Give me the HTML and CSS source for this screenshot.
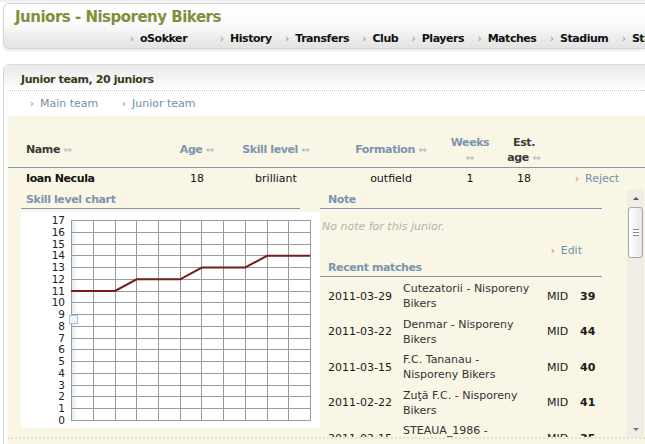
FILE: index.html
```html
<!DOCTYPE html>
<html>
<head>
<meta charset="utf-8">
<title>Juniors - Nisporeny Bikers</title>
<link rel="stylesheet" href="styles.css">
</head>
<body>
<header class="top">
  <h1 class="title">Juniors - Nisporeny Bikers</h1>
  <nav class="nav">
    <a class="nav-item first"><span class="arr">›</span>oSokker</a>
    <a class="nav-item"><span class="arr">›</span>History</a>
    <a class="nav-item"><span class="arr">›</span>Transfers</a>
    <a class="nav-item"><span class="arr">›</span>Club</a>
    <a class="nav-item"><span class="arr">›</span>Players</a>
    <a class="nav-item"><span class="arr">›</span>Matches</a>
    <a class="nav-item"><span class="arr">›</span>Stadium</a>
    <a class="nav-item"><span class="arr">›</span>Statistics</a>
  </nav>
</header>

<section class="panel">
  <div class="panel-head">Junior team, 20 juniors</div>
  <div class="tabs">
    <a class="tab first"><span class="arr">›</span>Main team</a>
    <a class="tab"><span class="arr">›</span>Junior team</a>
  </div>
  <div class="content">
    <div class="grid thead">
      <div class="c-name dark">Name <span class="sort">⇔</span></div>
      <div class="c-mid">Age <span class="sort">⇔</span></div>
      <div class="c-mid">Skill level <span class="sort">⇔</span></div>
      <div></div>
      <div class="c-mid">Formation <span class="sort">⇔</span></div>
      <div class="c-mid">Weeks<br><span class="sort">⇔</span></div>
      <div class="c-mid dark">Est.<br>age <span class="sort">⇔</span></div>
      <div></div>
    </div>
    <div class="grid trow">
      <div class="c-name"><b>Ioan Necula</b></div>
      <div class="c-mid">18</div>
      <div class="c-mid">brilliant</div>
      <div></div>
      <div class="c-mid">outfield</div>
      <div class="c-mid">1</div>
      <div class="c-mid">18</div>
      <div class="c-act"><a class="link"><span class="arr">›</span>Reject</a></div>
    </div>

    <div class="detail">
      <div class="col-chart">
        <div class="sub-title">Skill level chart</div>
        <div class="chart">
          <svg width="299" height="216" viewBox="0 0 299 216">
            <defs>
              <linearGradient id="shade" x1="0" x2="1" y1="0" y2="0">
                <stop offset="0" stop-color="#d6e2ee"/>
                <stop offset="1" stop-color="#ffffff" stop-opacity="0"/>
              </linearGradient>
            </defs>
            <rect x="50" y="8" width="9" height="200" fill="url(#shade)"/>
            <g stroke="#9a9a9a" stroke-width="1" shape-rendering="crispEdges">
              <line x1="50" y1="8.5" x2="289" y2="8.5"/>
              <line x1="50" y1="20.3" x2="289" y2="20.3"/>
              <line x1="50" y1="32" x2="289" y2="32"/>
              <line x1="50" y1="43.8" x2="289" y2="43.8"/>
              <line x1="50" y1="55.5" x2="289" y2="55.5"/>
              <line x1="50" y1="67.3" x2="289" y2="67.3"/>
              <line x1="50" y1="79" x2="289" y2="79"/>
              <line x1="50" y1="90.8" x2="289" y2="90.8"/>
              <line x1="50" y1="102.6" x2="289" y2="102.6"/>
              <line x1="50" y1="114.4" x2="289" y2="114.4"/>
              <line x1="50" y1="126.1" x2="289" y2="126.1"/>
              <line x1="50" y1="137.9" x2="289" y2="137.9"/>
              <line x1="50" y1="149.6" x2="289" y2="149.6"/>
              <line x1="50" y1="161.4" x2="289" y2="161.4"/>
              <line x1="50" y1="173.1" x2="289" y2="173.1"/>
              <line x1="50" y1="184.9" x2="289" y2="184.9"/>
              <line x1="50" y1="196.6" x2="289" y2="196.6"/>
              <line x1="50" y1="208.5" x2="289" y2="208.5"/>
              <line x1="50.5" y1="8" x2="50.5" y2="209"/>
              <line x1="72.2" y1="8" x2="72.2" y2="209"/>
              <line x1="94" y1="8" x2="94" y2="209"/>
              <line x1="115.7" y1="8" x2="115.7" y2="209"/>
              <line x1="137.4" y1="8" x2="137.4" y2="209"/>
              <line x1="159.1" y1="8" x2="159.1" y2="209"/>
              <line x1="180.9" y1="8" x2="180.9" y2="209"/>
              <line x1="202.6" y1="8" x2="202.6" y2="209"/>
              <line x1="224.3" y1="8" x2="224.3" y2="209"/>
              <line x1="246" y1="8" x2="246" y2="209"/>
              <line x1="267.8" y1="8" x2="267.8" y2="209"/>
              <line x1="289.5" y1="8" x2="289.5" y2="209"/>
            </g>
            <rect x="48.5" y="103.5" width="8" height="8" fill="#eef4fa" stroke="#a9c3dc"/>
            <polyline fill="none" stroke="#761b1b" stroke-width="2" points="50,79 94,79 115.7,67.3 159.1,67.3 180.9,55.5 224.3,55.5 246,43.8 289,43.8"/>
            <g class="axis" text-anchor="end">
              <text x="44" y="12">17</text>
              <text x="44" y="23.8">16</text>
              <text x="44" y="35.5">15</text>
              <text x="44" y="47.3">14</text>
              <text x="44" y="59">13</text>
              <text x="44" y="70.8">12</text>
              <text x="44" y="82.5">11</text>
              <text x="44" y="94.3">10</text>
              <text x="44" y="106.1">9</text>
              <text x="44" y="117.9">8</text>
              <text x="44" y="129.6">7</text>
              <text x="44" y="141.4">6</text>
              <text x="44" y="153.1">5</text>
              <text x="44" y="164.9">4</text>
              <text x="44" y="176.6">3</text>
              <text x="44" y="188.4">2</text>
              <text x="44" y="200.1">1</text>
              <text x="44" y="211.9">0</text>
            </g>
          </svg>
        </div>
      </div>

      <div class="col-info">
        <div class="sub-title">Note</div>
        <div class="note">No note for this junior.</div>
        <div class="edit"><a class="link"><span class="arr">›</span>Edit</a></div>
        <div class="sub-title">Recent matches</div>
        <div class="matches">
          <div class="match">
            <div class="m-date">2011-03-29</div>
            <div class="m-name">Cutezatorii - Nisporeny<br>Bikers</div>
            <div class="m-pos">MID</div>
            <div class="m-score">39</div>
          </div>
          <div class="match">
            <div class="m-date">2011-03-22</div>
            <div class="m-name">Denmar - Nisporeny<br>Bikers</div>
            <div class="m-pos">MID</div>
            <div class="m-score">44</div>
          </div>
          <div class="match">
            <div class="m-date">2011-03-15</div>
            <div class="m-name">F.C. Tananau -<br>Nisporeny Bikers</div>
            <div class="m-pos">MID</div>
            <div class="m-score">40</div>
          </div>
          <div class="match">
            <div class="m-date">2011-02-22</div>
            <div class="m-name">Zuţă F.C. - Nisporeny<br>Bikers</div>
            <div class="m-pos">MID</div>
            <div class="m-score">41</div>
          </div>
          <div class="match">
            <div class="m-date">2011-02-15</div>
            <div class="m-name">STEAUA_1986 -<br>Nisporeny Bikers</div>
            <div class="m-pos">MID</div>
            <div class="m-score">35</div>
          </div>
        </div>
      </div>

      <div class="scrollbar">
        <div class="sb-btn"><span class="tri up"></span></div>
        <div class="sb-thumb"><span class="grip"></span></div>
        <div class="sb-track"></div>
        <div class="sb-btn"><span class="tri down"></span></div>
      </div>
    </div>
    <div class="bottom-edge"></div>
  </div>
</section>
</body>
</html>
```
FILE: styles.css
```css
html, body {
  margin: 0;
  padding: 0;
}
body {
  width: 645px;
  height: 444px;
  overflow: hidden;
  background: linear-gradient(#ececec, #ffffff 4px);
  font-family: "DejaVu Sans", Verdana, sans-serif;
  font-size: 11px;
  color: #111;
}
a { text-decoration: none; cursor: pointer; }
b { letter-spacing: -0.4px; }

.arr {
  display: inline-block;
  color: #cc7a3a;
  font-size: 10px;
  font-weight: normal;
  letter-spacing: 0;
  margin-right: 6px;
}

/* top header */
.top {
  margin: 3px 0 0 3px;
  height: 44px;
  border: 1px solid #d6d6d6;
  border-right: 0;
  border-radius: 6px 0 0 6px;
  background: linear-gradient(#ffffff 0%, #fbfbfb 45%, #e3e3e3 100%);
  box-shadow: 0 2px 2px rgba(0, 0, 0, 0.07);
  overflow: hidden;
}
.title {
  margin: 0;
  padding: 4px 0 0 11px;
  font-size: 15px;
  line-height: 18px;
  letter-spacing: -0.5px;
  font-weight: bold;
  color: #7f8f3c;
  white-space: nowrap;
}
.nav {
  display: flex;
  margin-top: 6px;
  padding-left: 126px;
  line-height: 14px;
  white-space: nowrap;
}
.nav-item {
  flex: none;
  font-weight: bold;
  letter-spacing: -0.45px;
  color: #111;
  margin-right: 13.5px;
}
.nav-item.first { width: 90px; margin-right: 0; }

/* panel */
.panel {
  margin: 15px 0 0 3px;
  border-top: 1px solid #dcdcdc;
  border-left: 1px solid #d4d4d4;
  border-radius: 6px 0 0 0;
  height: 380px;
}
.panel-head {
  height: 21px;
  padding: 4px 0 0 17px;
  line-height: 22px;
  font-weight: bold;
  letter-spacing: -0.4px;
  color: #2f4216;
  background: linear-gradient(#e9e9e9, #ffffff);
  border-radius: 6px 0 0 0;
}
.tabs {
  display: flex;
  margin-left: 4px;
  border-top: 1px dotted #c6c6c6;
  height: 25px;
  line-height: 26px;
  padding-left: 22px;
}
.tab { flex: none; color: #7290aa; }
.tab.first { width: 92px; }

.content {
  margin-left: 4px;
  background: #f9f6e6;
  height: 328px;
}

.grid {
  display: grid;
  grid-template-columns: 158px 62px 96px 8px 118px 40px 68px 1fr;
  align-items: center;
}
.thead {
  height: 35px;
  padding-top: 16px;
  border-bottom: 1px solid #8797b0;
  line-height: 15px;
  font-weight: bold;
  letter-spacing: -0.4px;
  color: #7a95ad;
  white-space: nowrap;
}
.thead .dark { color: #3a3a3a; }
.sort { color: #a9b5c2; font-weight: normal; font-size: 10px; letter-spacing: 0; }
.c-name { padding-left: 18px; }
.c-mid { text-align: center; }
.c-act { padding-left: 17px; }
.trow {
  height: 22px;
  line-height: 22px;
  color: #111;
}
.link { color: #7290aa; }

/* detail area */
.detail {
  display: flex;
  height: 247px;
  overflow: hidden;
}
.col-chart {
  width: 299px;
  padding-left: 13px;
  flex: none;
}
.sub-title {
  height: 18px;
  line-height: 19px;
  border-bottom: 1px solid #8797b0;
  font-weight: bold;
  letter-spacing: -0.4px;
  color: #7a95ad;
  padding-left: 5px;
}
.col-chart .sub-title { margin-right: 20px; }
.chart {
  margin-top: 3px;
  height: 216px;
  background: #ffffff;
}
.chart svg { display: block; }
.axis text {
  font-family: "DejaVu Sans", Verdana, sans-serif;
  font-size: 10.5px;
  fill: #222;
}

.col-info {
  width: 282px;
  flex: none;
}
.col-info .sub-title { padding-left: 8px; }
.note {
  padding: 10px 0 0 2px;
  line-height: 15px;
  font-style: italic;
  color: #b3b3ad;
}
.edit {
  margin-top: 9px;
  line-height: 15px;
  text-align: right;
  padding-right: 20px;
}
.matches { padding-left: 8px; }
.match {
  display: grid;
  grid-template-columns: 75px 144px 33px 1fr;
  align-items: center;
  padding: 4px 0 1.5px;
  line-height: 15px;
  color: #1a1a1a;
}
.m-name { color: #333; }
.m-score { font-weight: bold; }

/* fake old-style scrollbar */
.scrollbar {
  margin-left: auto;
  margin-right: 1px;
  width: 17px;
  display: flex;
  flex-direction: column;
  background: #efede6;
}
.sb-btn {
  height: 16px;
  display: flex;
  align-items: center;
  justify-content: center;
}
.tri {
  width: 0;
  height: 0;
  border-left: 3px solid transparent;
  border-right: 3px solid transparent;
}
.tri.up { border-bottom: 3px solid #555; }
.tri.down { border-top: 3px solid #777; }
.sb-thumb {
  margin: 1px 1px 0;
  height: 49px;
  border: 1px solid #a8a8a8;
  border-radius: 3px;
  background: linear-gradient(to right, #ffffff, #e6e6e6);
  display: flex;
  align-items: center;
  justify-content: center;
}
.grip {
  width: 6px;
  height: 5px;
  border-top: 1px solid #888;
  border-bottom: 1px solid #888;
  background: linear-gradient(#fff 0 2px, #888 2px 3px, #fff 3px);
}
.sb-track { flex: 1; }

.bottom-edge {
  height: 4px;
  border-top: 2px dotted #e4e0c8;
}
```
